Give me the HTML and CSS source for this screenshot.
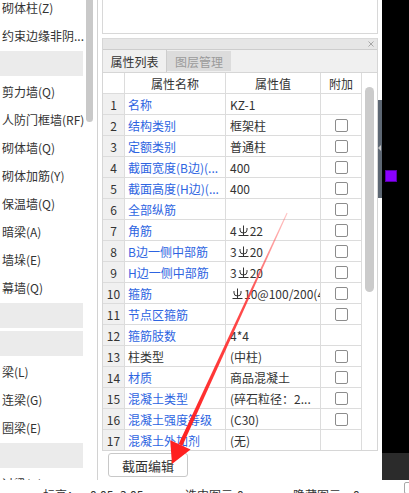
FILE: index.html
```html
<!DOCTYPE html>
<html lang="zh">
<head>
<meta charset="utf-8">
<title>属性列表</title>
<link rel="stylesheet" href="styles.css">
</head>
<body>
<div class="main">
  <aside class="left">
    <ul class="list">
      <li>砌体柱(Z)</li>
      <li>约束边缘非阴...</li>
      <li class="band"></li>
      <li>剪力墙(Q)</li>
      <li>人防门框墙(RF)</li>
      <li>砌体墙(Q)</li>
      <li>砌体加筋(Y)</li>
      <li>保温墙(Q)</li>
      <li>暗梁(A)</li>
      <li>墙垛(E)</li>
      <li>幕墙(Q)</li>
      <li class="band"></li>
      <li class="band"></li>
      <li>梁(L)</li>
      <li>连梁(G)</li>
      <li>圈梁(E)</li>
      <li class="band"></li>
      <li>过梁(G)</li>
    </ul>
    <div class="vscroll"><div class="thumb"></div></div>
  </aside>

  <section class="right">
    <div class="topbox"></div>
    <div class="prop">
      <div class="prophead">
        <svg class="close" width="6" height="6" viewBox="0 0 6 6"><path d="M0.5 0.5L5.5 5.5M5.5 0.5L0.5 5.5"/></svg>
      </div>
      <div class="tabs">
        <span class="tab active">属性列表</span>
        <span class="tab off">图层管理</span>
      </div>
      <div class="tablewrap">
        <div class="grid">
          <div class="row head"><div class="c n"></div><div class="c">属性名称</div><div class="c">属性值</div><div class="c">附加</div></div>
          <div class="row"><div class="c n">1</div><div class="c name">名称</div><div class="c val">KZ-1</div><div class="c chk"></div></div>
          <div class="row"><div class="c n">2</div><div class="c name">结构类别</div><div class="c val">框架柱</div><div class="c chk"><span class="box"></span></div></div>
          <div class="row"><div class="c n">3</div><div class="c name">定额类别</div><div class="c val">普通柱</div><div class="c chk"><span class="box"></span></div></div>
          <div class="row"><div class="c n">4</div><div class="c name">截面宽度(B边)(...</div><div class="c val">400</div><div class="c chk"><span class="box"></span></div></div>
          <div class="row"><div class="c n">5</div><div class="c name">截面高度(H边)(...</div><div class="c val">400</div><div class="c chk"><span class="box"></span></div></div>
          <div class="row"><div class="c n">6</div><div class="c name">全部纵筋</div><div class="c val"></div><div class="c chk"><span class="box"></span></div></div>
          <div class="row"><div class="c n">7</div><div class="c name">角筋</div><div class="c val">4<svg class="rb" viewBox="0 0 11 11"><path d="M5.5 0.5V10M2 3v2a3.5 3 0 0 0 7 0V3M0.5 10.5h10"/></svg>22</div><div class="c chk"><span class="box"></span></div></div>
          <div class="row"><div class="c n">8</div><div class="c name">B边一侧中部筋</div><div class="c val">3<svg class="rb" viewBox="0 0 11 11"><path d="M5.5 0.5V10M2 3v2a3.5 3 0 0 0 7 0V3M0.5 10.5h10"/></svg>20</div><div class="c chk"><span class="box"></span></div></div>
          <div class="row"><div class="c n">9</div><div class="c name">H边一侧中部筋</div><div class="c val">3<svg class="rb" viewBox="0 0 11 11"><path d="M5.5 0.5V10M2 3v2a3.5 3 0 0 0 7 0V3M0.5 10.5h10"/></svg>20</div><div class="c chk"><span class="box"></span></div></div>
          <div class="row"><div class="c n">10</div><div class="c name">箍筋</div><div class="c val"><svg class="rb first" viewBox="0 0 11 11"><path d="M5.5 0.5V10M2 3v2a3.5 3 0 0 0 7 0V3M0.5 10.5h10"/></svg>10@100/200(4*4)</div><div class="c chk"><span class="box"></span></div></div>
          <div class="row"><div class="c n">11</div><div class="c name">节点区箍筋</div><div class="c val"></div><div class="c chk"><span class="box"></span></div></div>
          <div class="row"><div class="c n">12</div><div class="c name">箍筋肢数</div><div class="c val">4*4</div><div class="c chk"></div></div>
          <div class="row"><div class="c n">13</div><div class="c name plain">柱类型</div><div class="c val">(中柱)</div><div class="c chk"><span class="box"></span></div></div>
          <div class="row"><div class="c n">14</div><div class="c name">材质</div><div class="c val">商品混凝土</div><div class="c chk"><span class="box"></span></div></div>
          <div class="row"><div class="c n">15</div><div class="c name">混凝土类型</div><div class="c val">(碎石粒径：2...</div><div class="c chk"><span class="box"></span></div></div>
          <div class="row"><div class="c n">16</div><div class="c name">混凝土强度等级</div><div class="c val">(C30)</div><div class="c chk"><span class="box"></span></div></div>
          <div class="row"><div class="c n">17</div><div class="c name">混凝土外加剂</div><div class="c val">(无)</div><div class="c chk"></div></div>
        </div>
        <div class="tscroll"><div class="tthumb"></div></div>
      </div>
    </div>
    <button class="btn">截面编辑</button>
  </section>

  <div class="splitter"><div class="handle"></div></div>

  <div class="dark">
    <div class="dtop"><div class="purple"></div></div>
    <div class="dbot"></div>
  </div>
</div>

<footer class="status">
  <span class="s1">标高：</span>
  <span class="s2">0.05~3.05</span>
  <span class="s3">选中图元:</span>
  <span class="s4">0</span>
  <span class="s5">隐藏图元:</span>
  <span class="s6">0</span>
  <span class="sbox"></span>
</footer>

<svg class="arrow" width="409" height="493" viewBox="0 0 409 493">
  <defs>
    <linearGradient id="ag" x1="287" y1="213" x2="180" y2="445" gradientUnits="userSpaceOnUse">
      <stop offset="0" stop-color="#ff5a5a" stop-opacity="0.35"/>
      <stop offset="0.35" stop-color="#ff3030" stop-opacity="0.85"/>
      <stop offset="1" stop-color="#ff2020"/>
    </linearGradient>
  </defs>
  <polygon points="287.6,213.2 286.6,212.8 178.6,443.9 182.4,445.7" fill="url(#ag)"/>
  <polygon points="170.2,440.2 190.6,449.4 172,464" fill="#ff2020"/>
</svg>
</body>
</html>
```

FILE: styles.css
```css
* {
  box-sizing: border-box;
  margin: 0;
  padding: 0;
}

html,
body {
  width: 409px;
  height: 493px;
  overflow: hidden;
}

body {
  position: relative;
  background: #fff;
  color: #333;
  font-family: "Noto Sans CJK SC", "Noto Sans", sans-serif;
  font-size: 12px;
}

.main {
  display: flex;
  height: 480px;
}

/* left component list */
.left {
  width: 98px;
  flex: none;
  display: flex;
  border-right: 1px solid #d2d2d2;
  overflow: hidden;
}

.list {
  list-style: none;
  width: 84px;
  flex: none;
  margin-top: -6px;
}

.list li {
  height: 28px;
  line-height: 28px;
  padding-left: 2px;
  white-space: nowrap;
  overflow: hidden;
}

.list li.band {
  padding: 1px 0 0 0;
}

.list li.band::before {
  content: "";
  display: block;
  width: 83px;
  height: 25px;
  background: #ebebeb;
}

.vscroll {
  width: 7px;
  flex: none;
  margin-left: 2px;
}

.thumb {
  height: 122px;
  background: #c9c9c9;
  border-radius: 0 0 4px 4px;
}

/* right property panel */
.right {
  width: 280px;
  flex: none;
  display: flex;
  flex-direction: column;
  padding-left: 4px;
}

.topbox {
  height: 34px;
  flex: none;
  border: 1px solid #d8d8d8;
  border-top: none;
}

.prop {
  margin-top: 4px;
  border-left: 1px solid #d6d6d6;
  border-right: 1px solid #d6d6d6;
}

.prophead {
  height: 11px;
  display: flex;
  align-items: center;
  justify-content: flex-end;
  padding-right: 3px;
  background: #e6e6e6;
  border-top: 1px solid #dadada;
}

.close {
  display: block;
  fill: none;
  stroke: #a6a6a6;
  stroke-width: 1;
}

.tabs {
  height: 24px;
  display: flex;
  background: #f0f0f0;
  border-top: 1px solid #cdcdcd;
  border-bottom: 1px solid #d6d6d6;
}

.tab {
  width: 64px;
  display: flex;
  align-items: center;
  justify-content: center;
  font-size: 12px;
}

.tab.active {
  color: #333;
  border-right: 1px solid #cdcdcd;
}

.tab.off {
  margin: 1px 0;
  background: #dcdcdc;
  color: #9a9a9a;
}

.tablewrap {
  display: flex;
  border-bottom: 1px solid #d6d6d6;
}

.grid {
  width: 259px;
  flex: none;
}

.row {
  display: grid;
  grid-template-columns: 22px 101px 95px 41px;
  height: 21px;
  border-bottom: 1px solid #dcdcdc;
}

.row:last-child {
  border-bottom: none;
  height: 20px;
}

.c {
  display: flex;
  align-items: center;
  border-right: 1px solid #dcdcdc;
  white-space: nowrap;
  overflow: hidden;
}

.c.n {
  justify-content: center;
  background: #f0f0f0;
  font-size: 12px;
}

.head .c {
  justify-content: center;
}

.head .c.n {
  background: #fff;
}

.c.name {
  padding-left: 3px;
  color: #2d64e1;
}

.c.name.plain {
  color: #333;
}

.c.val {
  padding-left: 4px;
}

.c.chk {
  justify-content: center;
}

.box {
  display: block;
  width: 13px;
  height: 13px;
  border: 1px solid #8c8c8c;
  border-radius: 2px;
  background: #fff;
}

.rb {
  width: 11px;
  height: 11px;
  flex: none;
  margin: 0 1px;
  fill: none;
  stroke: #333;
  stroke-width: 1;
}

.rb.first {
  margin-left: 2px;
}

.tscroll {
  width: 15px;
  flex: none;
}

.tthumb {
  width: 9px;
  height: 205px;
  margin: 14px 0 0 3px;
  background: #cbcbcb;
  border-radius: 5px;
}

.btn {
  align-self: flex-start;
  width: 80px;
  height: 24px;
  margin: 2px 0 0 6px;
  border: 1px solid #c8c8c8;
  border-radius: 3px;
  background: #fff;
  color: #333;
  font-family: inherit;
  font-size: 13px;
}

/* splitter + dark viewport */
.splitter {
  width: 4px;
  flex: none;
}

.handle {
  position: relative;
  height: 98px;
  margin-top: 100px;
  background: #5d6773;
}

.handle::after {
  content: "";
  position: absolute;
  left: 0;
  top: 45px;
  border-right: 3px solid #c6c6c6;
  border-top: 3px solid transparent;
  border-bottom: 3px solid transparent;
}

.dark {
  width: 27px;
  flex: none;
  display: flex;
  flex-direction: column;
}

.dtop {
  height: 453px;
  background: #000;
  padding-top: 170px;
}

.purple {
  width: 12px;
  height: 12px;
  margin-left: 3px;
  background: #8a00ff;
  border: 1px solid #5a00aa;
}

.dbot {
  flex: 1;
  background: #2b2b2b;
}

/* status bar */
.status {
  height: 13px;
  display: flex;
  align-items: flex-start;
  padding: 7px 0 0 43px;
  font-size: 12px;
  line-height: 16px;
  white-space: nowrap;
  overflow: hidden;
  background: #fff;
}

.status span {
  flex: none;
}

.s1 { width: 47px; }
.s2 { width: 95px; }
.s3 { width: 52px; }
.s4 { width: 56px; }
.s5 { width: 60px; }
.s6 { width: 51px; }

.status .sbox {
  width: 12px;
  height: 12px;
  margin-top: -5px;
  border: 1px solid #a8a8a8;
  border-radius: 2px;
}

.arrow {
  position: absolute;
  left: 0;
  top: 0;
  pointer-events: none;
}
```
